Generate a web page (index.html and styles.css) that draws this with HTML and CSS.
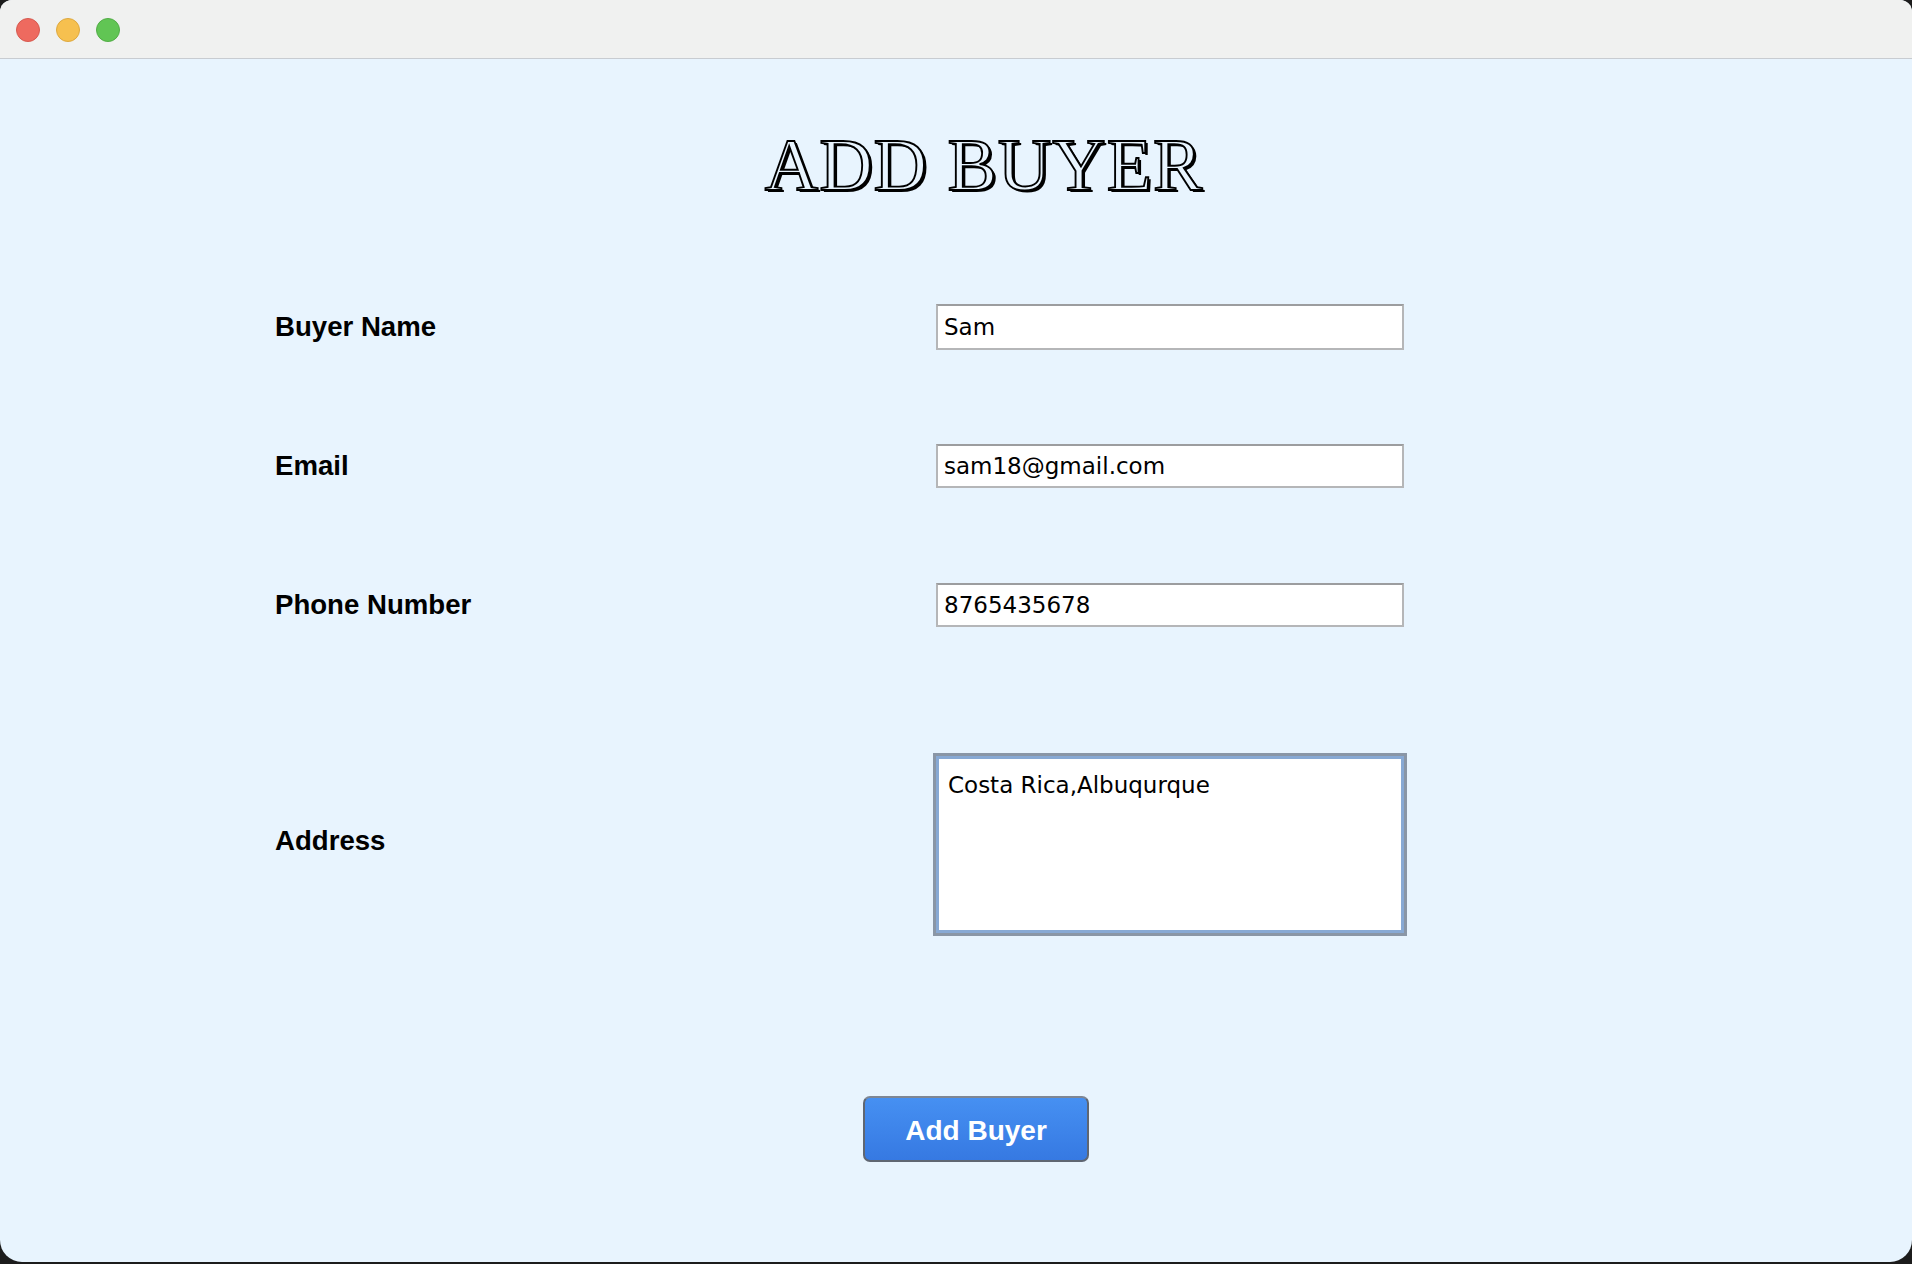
FILE: index.html
```html
<!DOCTYPE html>
<html>
<head>
<meta charset="utf-8">
<link rel="stylesheet" href="styles.css">
</head>
<body>
<div class="window">
  <div class="titlebar">
    <span class="light red"></span>
    <span class="light yellow"></span>
    <span class="light green"></span>
  </div>
  <div class="content">
    <h1 class="title">ADD BUYER</h1>
    <div class="row row-1">
      <label class="label">Buyer Name</label>
      <input class="field" type="text" value="Sam" readonly>
    </div>
    <div class="row row-2">
      <label class="label">Email</label>
      <input class="field" type="text" value="sam18@gmail.com" readonly>
    </div>
    <div class="row row-3">
      <label class="label">Phone Number</label>
      <input class="field" type="text" value="8765435678" readonly>
    </div>
    <div class="row row-4">
      <label class="label">Address</label>
      <textarea class="area" readonly>Costa Rica,Albuqurque</textarea>
    </div>
    <div class="actions">
      <button class="btn">Add Buyer</button>
    </div>
  </div>
</div>
</body>
</html>
```

FILE: styles.css
```css
* { box-sizing: border-box; }
html, body { margin: 0; padding: 0; }
body {
  background: #1c1c1c;
  width: 1912px;
  height: 1264px;
  overflow: hidden;
}
.window {
  width: 1912px;
  height: 1262px;
  border-radius: 12px 12px 22px 22px;
  overflow: hidden;
  background: #e8f4fe;
  display: flex;
  flex-direction: column;
}
.titlebar {
  height: 59px;
  flex: none;
  background: #f0f1f0;
  border-bottom: 1px solid #c8ccd1;
  display: flex;
  align-items: center;
  padding-left: 16px;
  gap: 16px;
  padding-top: 2px;
}
.light {
  width: 24px;
  height: 24px;
  border-radius: 50%;
  display: block;
}
.red { background: #ee6a5f; border: 1px solid #d65a50; }
.yellow { background: #f6c04f; border: 1px solid #dea93f; }
.green { background: #61c554; border: 1px solid #52ad46; }

.content {
  flex: 1;
  display: flex;
  flex-direction: column;
  padding-top: 66px;
}
.title {
  margin: 0;
  height: 80px;
  line-height: 80px;
  padding-left: 56px;
  text-align: center;
  font-family: "Liberation Serif", "Times New Roman", serif;
  font-weight: normal;
  font-size: 74px;
  letter-spacing: 1px;
  color: #e8f4fe;
  -webkit-text-stroke: 1.9px #000;
  text-shadow: 2.5px 1.5px 0 #000;
}
.row {
  display: flex;
  align-items: center;
  padding-left: 275px;
}
.row-1 { margin-top: 99px; height: 46px; }
.row-2 { margin-top: 94px; height: 44px; }
.row-3 { margin-top: 95px; height: 44px; }
.row-4 { margin-top: 126px; height: 183px; }
.label {
  width: 661px;
  flex: none;
  font-family: "Liberation Sans", Arial, sans-serif;
  font-weight: bold;
  font-size: 27.6px;
  color: #000;
}
.row-4 .label { margin-top: -8px; width: 658px; }
.field {
  width: 468px;
  height: 100%;
  margin: 0;
  border: 2px solid #b5b6b8;
  border-top-color: #9c9d9f;
  background: #fff;
  padding: 0 0 0 6px;
  font-family: "DejaVu Sans", Verdana, sans-serif;
  font-size: 23px;
  color: #000;
  outline: none;
}
.area {
  width: 474px;
  height: 183px;
  margin: 0;
  resize: none;
  border: 3px solid #8a96a6;
  box-shadow: inset 0 0 0 1px #8c9097;
  outline: 3px solid #88a9d4;
  outline-offset: -6px;
  background: #fff;
  padding: 15px 12px;
  font-family: "DejaVu Sans", Verdana, sans-serif;
  font-size: 23px;
  line-height: 28px;
  color: #000;
  overflow: hidden;
}
.actions {
  display: flex;
  padding-left: 863px;
  margin-top: 160px;
}
.btn {
  width: 226px;
  height: 66px;
  border: 2px solid #5f6672;
  border-top-color: #7e8694;
  border-radius: 7px;
  background: linear-gradient(#4690f2, #3679e2);
  color: #fff;
  font-family: "Liberation Sans", Arial, sans-serif;
  font-weight: bold;
  font-size: 28px;
  padding: 3px 0 0 0;
}
```
